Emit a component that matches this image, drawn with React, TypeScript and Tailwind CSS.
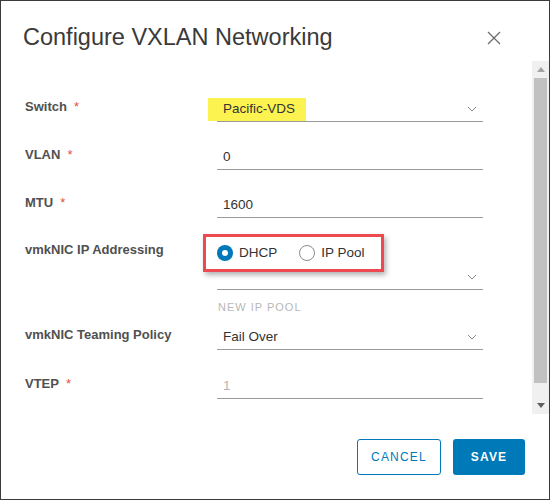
import React from 'react';

const font = { fontFamily: '"Liberation Sans", Arial, sans-serif' };

function Chevron() {
  return (
    <svg width="10" height="6" viewBox="0 0 10 6" className="shrink-0 mb-[2px]">
      <polyline points="1,1 5,5 9,1" fill="none" stroke="#8a8a8a" strokeWidth="1" />
    </svg>
  );
}

function Label({ text, required }: { text: string; required?: boolean }) {
  return (
    <div className="w-[216px] pl-[24px] pt-[1px] flex items-start">
      <span className="text-[13px] leading-[16px] font-bold text-[#505050]">{text}</span>
      {required && <span className="ml-[7px] text-[13px] leading-[16px] text-[#e0533f]">*</span>}
    </div>
  );
}

function Field({ value, muted, select }: { value?: string; muted?: boolean; select?: boolean }) {
  return (
    <div className="w-[266px] h-[24px] border-b border-[#9a9a9a] flex items-center justify-between pl-[6px] pr-[6px]">
      <span className={`text-[13.5px] ${muted ? 'text-[#b5b5b5]' : 'text-[#333]'}`}>{value}</span>
      {select && <Chevron />}
    </div>
  );
}

export default function App() {
  return (
    <div style={font} className="w-[550px] h-[500px] border border-[#3b3b3b] bg-white flex flex-col">
      <div className="h-[60px] shrink-0 flex items-start justify-between pl-[22px] pr-[48px] pt-[22px]">
        <h1 className="text-[23.5px] leading-[28px] font-normal text-[#3a3a3a]">Configure VXLAN Networking</h1>
        <svg width="14" height="14" viewBox="0 0 14 14" className="mt-[8px]">
          <line x1="1" y1="1" x2="13" y2="13" stroke="#6b6b6b" strokeWidth="1.2" />
          <line x1="13" y1="1" x2="1" y2="13" stroke="#6b6b6b" strokeWidth="1.2" />
        </svg>
      </div>

      <div className="h-[353px] shrink-0 flex">
        <div className="flex-1 pt-[37px]">
          <div className="flex">
            <Label text="Switch" required />
            <div className="relative w-[266px] h-[24px] border-b border-[#9a9a9a] flex items-center justify-between pl-[6px] pr-[6px]">
              <div className="absolute left-[-9px] top-0 w-[98px] h-[23px] bg-[#fdf350]" />
              <span className="relative text-[13.5px] text-[#333]">Pacific-VDS</span>
              <Chevron />
            </div>
          </div>

          <div className="flex mt-[24px]">
            <Label text="VLAN" required />
            <Field value="0" />
          </div>

          <div className="flex mt-[24px]">
            <Label text="MTU" required />
            <Field value="1600" />
          </div>

          <div className="flex mt-[23px]">
            <Label text="vmkNIC IP Addressing" />
            <div className="relative w-[266px] h-[24px] flex items-center">
              <div className="absolute left-[-14px] top-[-7px] w-[181px] h-[38px] border-[3px] border-[#ec4a50] shadow-[2px_3px_5px_rgba(0,0,0,0.3)]" />
              <label className="flex items-center gap-[6px] mr-[22px]">
                <span className="w-[16px] h-[16px] rounded-full bg-[#0079b8] flex items-center justify-center">
                  <span className="w-[6px] h-[6px] rounded-full bg-white" />
                </span>
                <span className="text-[13.5px] text-[#333]">DHCP</span>
              </label>
              <label className="flex items-center gap-[6px]">
                <span className="w-[16px] h-[16px] rounded-full border border-[#8c8c8c] bg-white" />
                <span className="text-[13.5px] text-[#333]">IP Pool</span>
              </label>
            </div>
          </div>

          <div className="flex mt-[1px]">
            <div className="w-[216px]" />
            <Field select />
          </div>

          <div className="flex mt-[10px]">
            <div className="w-[216px]" />
            <span className="pl-[1px] text-[11px] leading-[14px] tracking-[1px] text-[#b8b8b8]">NEW IP POOL</span>
          </div>

          <div className="flex mt-[12px]">
            <Label text="vmkNIC Teaming Policy" />
            <Field value="Fail Over" select />
          </div>

          <div className="flex mt-[25px]">
            <Label text="VTEP" required />
            <Field value="1" muted />
          </div>
        </div>

        <div className="w-[17px] bg-[#f0f0f0] flex flex-col">
          <div className="h-[17px] flex items-center justify-center">
            <svg width="8" height="5" viewBox="0 0 8 5"><polygon points="0,5 8,5 4,0" fill="#a3a3a3" /></svg>
          </div>
          <div className="h-[305px] mx-[2px] bg-[#c1c1c1]" />
          <div className="flex-1" />
          <div className="h-[17px] flex items-center justify-center">
            <svg width="8" height="5" viewBox="0 0 8 5"><polygon points="0,0 8,0 4,5" fill="#606060" /></svg>
          </div>
        </div>
      </div>

      <div className="flex-1 flex justify-end items-start gap-[12px] pt-[25px] pr-[24px]">
        <button className="w-[84px] h-[36px] rounded-[3px] border border-[#0079b8] text-[#0079b8] text-[12px] tracking-[1.2px]">CANCEL</button>
        <button className="w-[72px] h-[36px] rounded-[3px] bg-[#0079b8] text-white text-[12px] font-bold tracking-[1.2px]">SAVE</button>
      </div>
    </div>
  );
}
